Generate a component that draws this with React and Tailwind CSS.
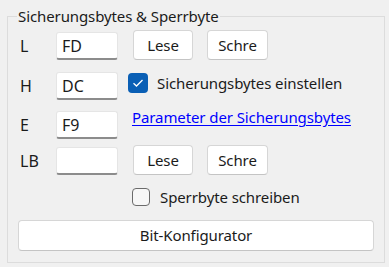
import React from "react";

const font = { fontFamily: '"Noto Sans", "Open Sans", sans-serif' };

function TextBox({ value }) {
  return (
    <div className="w-[62px] h-[28px] bg-white rounded-[3px] border border-[#e5e5e5] border-b-2 border-b-[#8c8c8c] flex items-center pl-[5px] text-[16px] text-[#1b1b1b] leading-none">
      {value}
    </div>
  );
}

function Btn({ children, className = "" }) {
  return (
    <div className={"h-[30px] bg-white rounded-[4px] border border-[#d6d6d6] border-b-[#c4c4c4] flex items-center justify-center text-[15px] tracking-[-0.1px] text-[#1b1b1b] " + className}>
      {children}
    </div>
  );
}

function Label({ children }) {
  return <div className="w-[36px] text-[16px] text-[#1b1b1b] leading-[28px]">{children}</div>;
}

export default function App() {
  return (
    <div className="w-[389px] h-[267px] bg-[#f0f0f0] pl-[7px] pt-[6px]" style={font}>
      <fieldset className="w-[378px] h-[257px] border border-[#dcdcdc] m-0 p-0">
        <legend className="ml-[9px] px-[1px] text-[15px] leading-[20px] text-[#1b1b1b] tracking-[-0.1px]">
          Sicherungsbytes &amp; Sperrbyte
        </legend>
        <div className="pl-[12px]">
          {/* Row L */}
          <div className="flex items-end mt-[4px] h-[30px]">
            <Label>L</Label>
            <TextBox value="FD" />
            <Btn className="w-[60px] ml-[15px]">Lese</Btn>
            <Btn className="w-[61px] ml-[14px]">Schre</Btn>
          </div>
          {/* Row H */}
          <div className="flex items-start mt-[12px] h-[28px]">
            <Label>H</Label>
            <TextBox value="DC" />
            <div className="flex items-center ml-[10px] mt-[1px]">
              <div className="w-[20px] h-[20px] rounded-[4px] bg-[#0a5fb5] flex items-center justify-center">
                <svg width="12" height="10" viewBox="0 0 12 10">
                  <path d="M1.5 5.2 L4.5 8 L10.5 2" fill="none" stroke="white" strokeWidth="1.3" />
                </svg>
              </div>
              <span className="ml-[9px] text-[15px] leading-[20px] text-[#1b1b1b] tracking-[-0.1px]">
                Sicherungsbytes einstellen
              </span>
            </div>
          </div>
          {/* Row E */}
          <div className="flex items-start mt-[8px]">
            <Label><div className="mt-[3px]">E</div></Label>
            <div className="mt-[3px]"><TextBox value="F9" /></div>
            <span className="ml-[14px] text-[15px] leading-[18px] text-[#0000ff] underline underline-offset-[2px] tracking-[-0.1px]">
              Parameter der Sicherungsbytes
            </span>
          </div>
          {/* Row LB */}
          <div className="flex items-end mt-[6px] h-[30px]">
            <Label>LB</Label>
            <TextBox value="" />
            <Btn className="w-[60px] ml-[15px]">Lese</Btn>
            <Btn className="w-[61px] ml-[14px]">Schre</Btn>
          </div>
          {/* Sperrbyte */}
          <div className="flex items-center mt-[13px] ml-[112px] h-[18px]">
            <div className="w-[18px] h-[18px] rounded-[4px] border border-[#6b6b6b] bg-[#f7f7f7]" />
            <span className="ml-[10px] text-[15px] leading-[20px] text-[#1b1b1b] tracking-[-0.1px]">
              Sperrbyte schreiben
            </span>
          </div>
        </div>
        <div className="pl-[10px] mt-[14px]">
          <Btn className="w-[356px] h-[31px]">Bit-Konfigurator</Btn>
        </div>
      </fieldset>
    </div>
  );
}
